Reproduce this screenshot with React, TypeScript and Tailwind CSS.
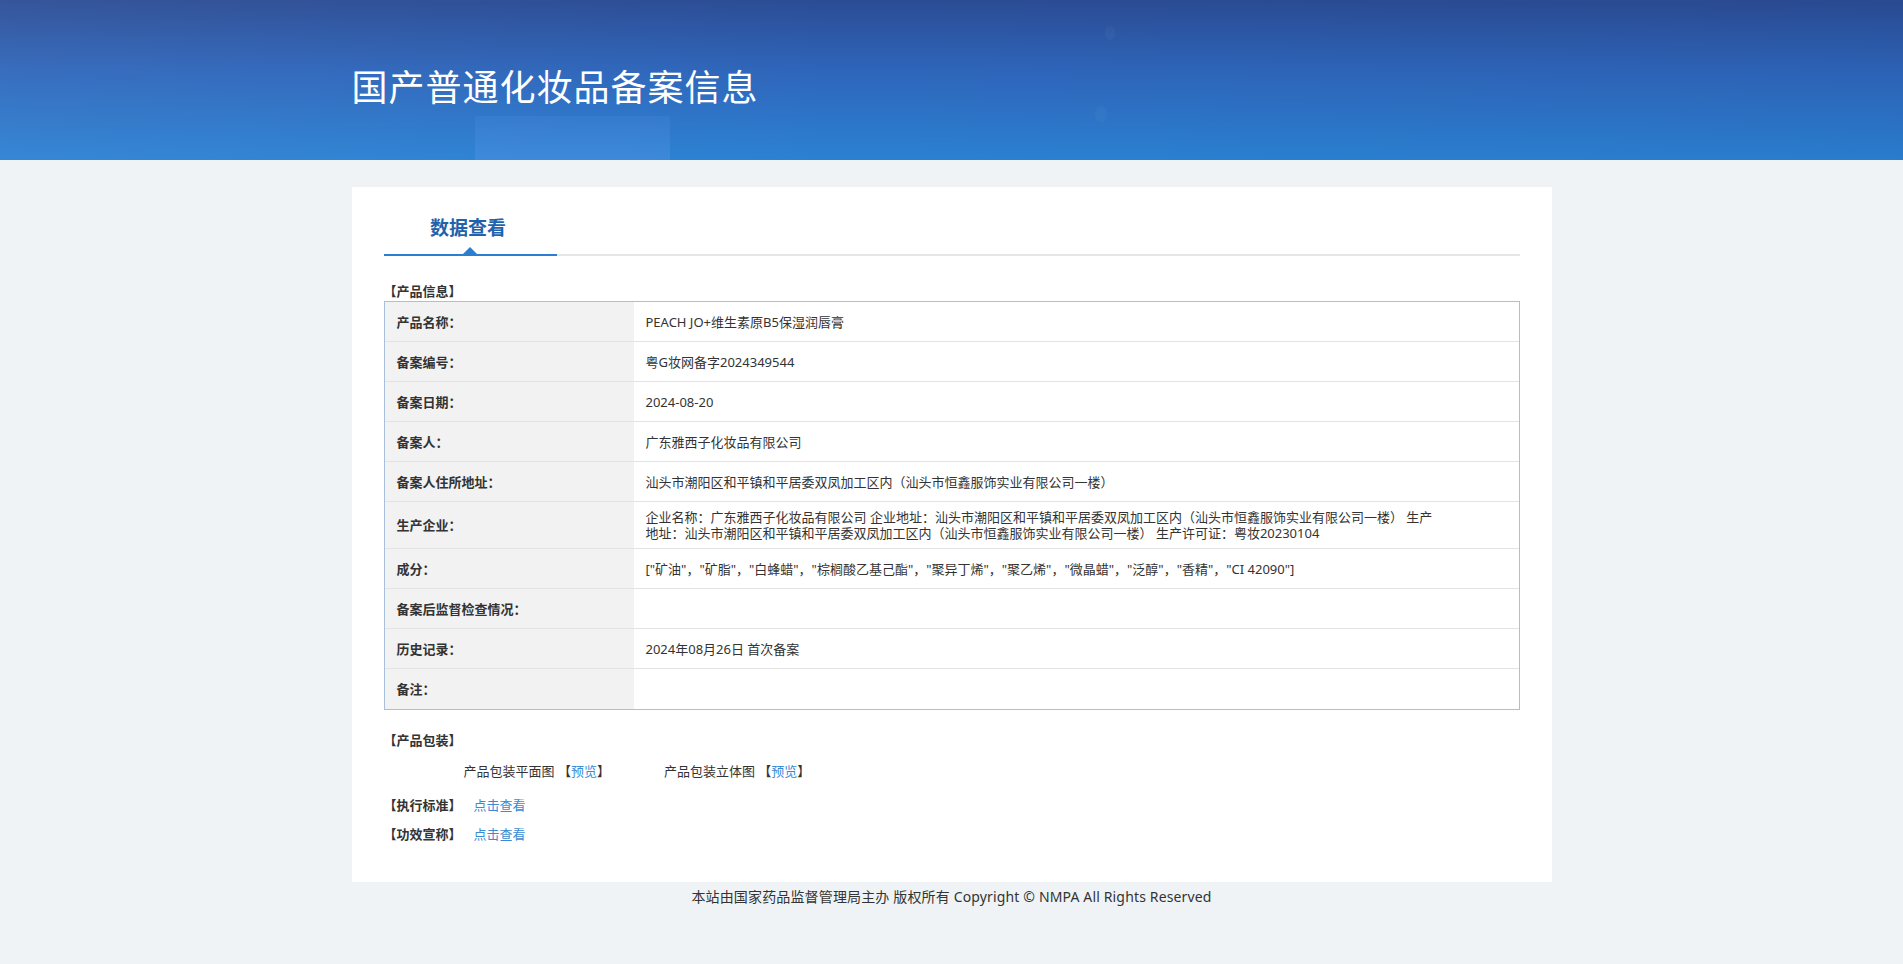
const rows: { label: string; value: string }[] = [
  { label: '产品名称：', value: 'PEACH JO+维生素原B5保湿润唇膏' },
  { label: '备案编号：', value: '粤G妆网备字2024349544' },
  { label: '备案日期：', value: '2024-08-20' },
  { label: '备案人：', value: '广东雅西子化妆品有限公司' },
  { label: '备案人住所地址：', value: '汕头市潮阳区和平镇和平居委双凤加工区内（汕头市恒鑫服饰实业有限公司一楼）' },
  {
    label: '生产企业：',
    value:
      '企业名称：广东雅西子化妆品有限公司 企业地址：汕头市潮阳区和平镇和平居委双凤加工区内（汕头市恒鑫服饰实业有限公司一楼） 生产地址：汕头市潮阳区和平镇和平居委双凤加工区内（汕头市恒鑫服饰实业有限公司一楼） 生产许可证：粤妆20230104',
  },
  { label: '成分：', value: '["矿油"，"矿脂"，"白蜂蜡"，"棕榈酸乙基己酯"，"聚异丁烯"，"聚乙烯"，"微晶蜡"，"泛醇"，"香精"，"CI 42090"]' },
  { label: '备案后监督检查情况：', value: '' },
  { label: '历史记录：', value: '2024年08月26日 首次备案' },
  { label: '备注：', value: '' },
];

export default function App() {
  return (
    <div className="min-h-screen bg-[#eff3f6] font-['Noto_Sans','Noto_Sans_CJK_SC',sans-serif] text-[#333]">
      {/* 顶部横幅 */}
      <div className="relative h-[160px] overflow-hidden bg-[linear-gradient(180deg,#2b4c95_0%,#2e66bb_45%,#2b81d3_100%)]">
        <div className="absolute inset-0 bg-[linear-gradient(90deg,rgba(255,255,255,0.05)_0%,rgba(255,255,255,0)_45%,rgba(0,0,40,0.04)_100%)]" />
        <div className="absolute left-[475px] top-[116px] h-[44px] w-[195px] bg-[linear-gradient(180deg,rgba(90,150,230,0.15)_0%,rgba(90,150,230,0.35)_100%)]" />
        <div className="absolute left-[1105px] top-[26px] h-[14px] w-[10px] rounded-full bg-white/[0.03]" />
        <div className="absolute left-[1095px] top-[106px] h-[16px] w-[12px] rounded-full bg-white/[0.03]" />
        <div className="relative mx-auto w-[1200px] pt-[64px]">
          <h1 className="text-[36px] leading-[48px] font-normal tracking-[1px] text-white">国产普通化妆品备案信息</h1>
        </div>
      </div>

      {/* 内容卡片 */}
      <div className="mx-auto mt-[27px] w-[1200px] bg-white px-8 pt-[27px] pb-[38px]">
        <div className="border-b-2 border-[#e6e6e6]">
          <div className="relative -mb-[2px] w-[173px] border-b-2 border-[#2a7fd0] pr-1 pb-3 text-center">
            <span className="text-[19px] leading-[28px] font-bold text-[#1f63ad]">数据查看</span>
            <span className="absolute bottom-0 left-1/2 h-0 w-0 -translate-x-1/2 border-x-[7px] border-b-[7px] border-x-transparent border-b-[#2a7fd0]" />
          </div>
        </div>

        <div className="mt-[25px] text-[13px] leading-[20px] font-bold">【产品信息】</div>
        <div className="border border-[#a9c0dc] text-[13px] leading-[16px]">
          {rows.map((r, i) => (
            <div key={r.label} className={`flex min-h-[40px] ${i < rows.length - 1 ? 'border-b border-[#e3e3e3]' : ''}`}>
              <div className="flex w-[249px] shrink-0 items-center bg-[#f2f2f2] px-3 font-bold">{r.label}</div>
              <div className="flex flex-1 items-center py-[7px] pr-[80px] pl-3">{r.value}</div>
            </div>
          ))}
        </div>

        <div className="mt-[20px] text-[13px] leading-[20px] font-bold">【产品包装】</div>
        <div className="mt-[11px] flex pl-[80px] text-[13px] leading-[20px]">
          <span>
            产品包装平面图 【<span className="text-[#3a8ad4]">预览</span>】
          </span>
          <span className="ml-[54px]">
            产品包装立体图 【<span className="text-[#3a8ad4]">预览</span>】
          </span>
        </div>
        <div className="mt-[14px] flex gap-3 text-[13px] leading-[20px]">
          <span className="font-bold">【执行标准】</span>
          <span className="text-[#3a8ad4]">点击查看</span>
        </div>
        <div className="mt-[9px] flex gap-3 text-[13px] leading-[20px]">
          <span className="font-bold">【功效宣称】</span>
          <span className="text-[#3a8ad4]">点击查看</span>
        </div>
      </div>

      {/* 页脚 */}
      <div className="pt-[5px] text-center text-[14px] leading-[20px] tracking-[0.15px] text-[#333]">
        本站由国家药品监督管理局主办 版权所有 Copyright © NMPA All Rights Reserved
      </div>
    </div>
  );
}
